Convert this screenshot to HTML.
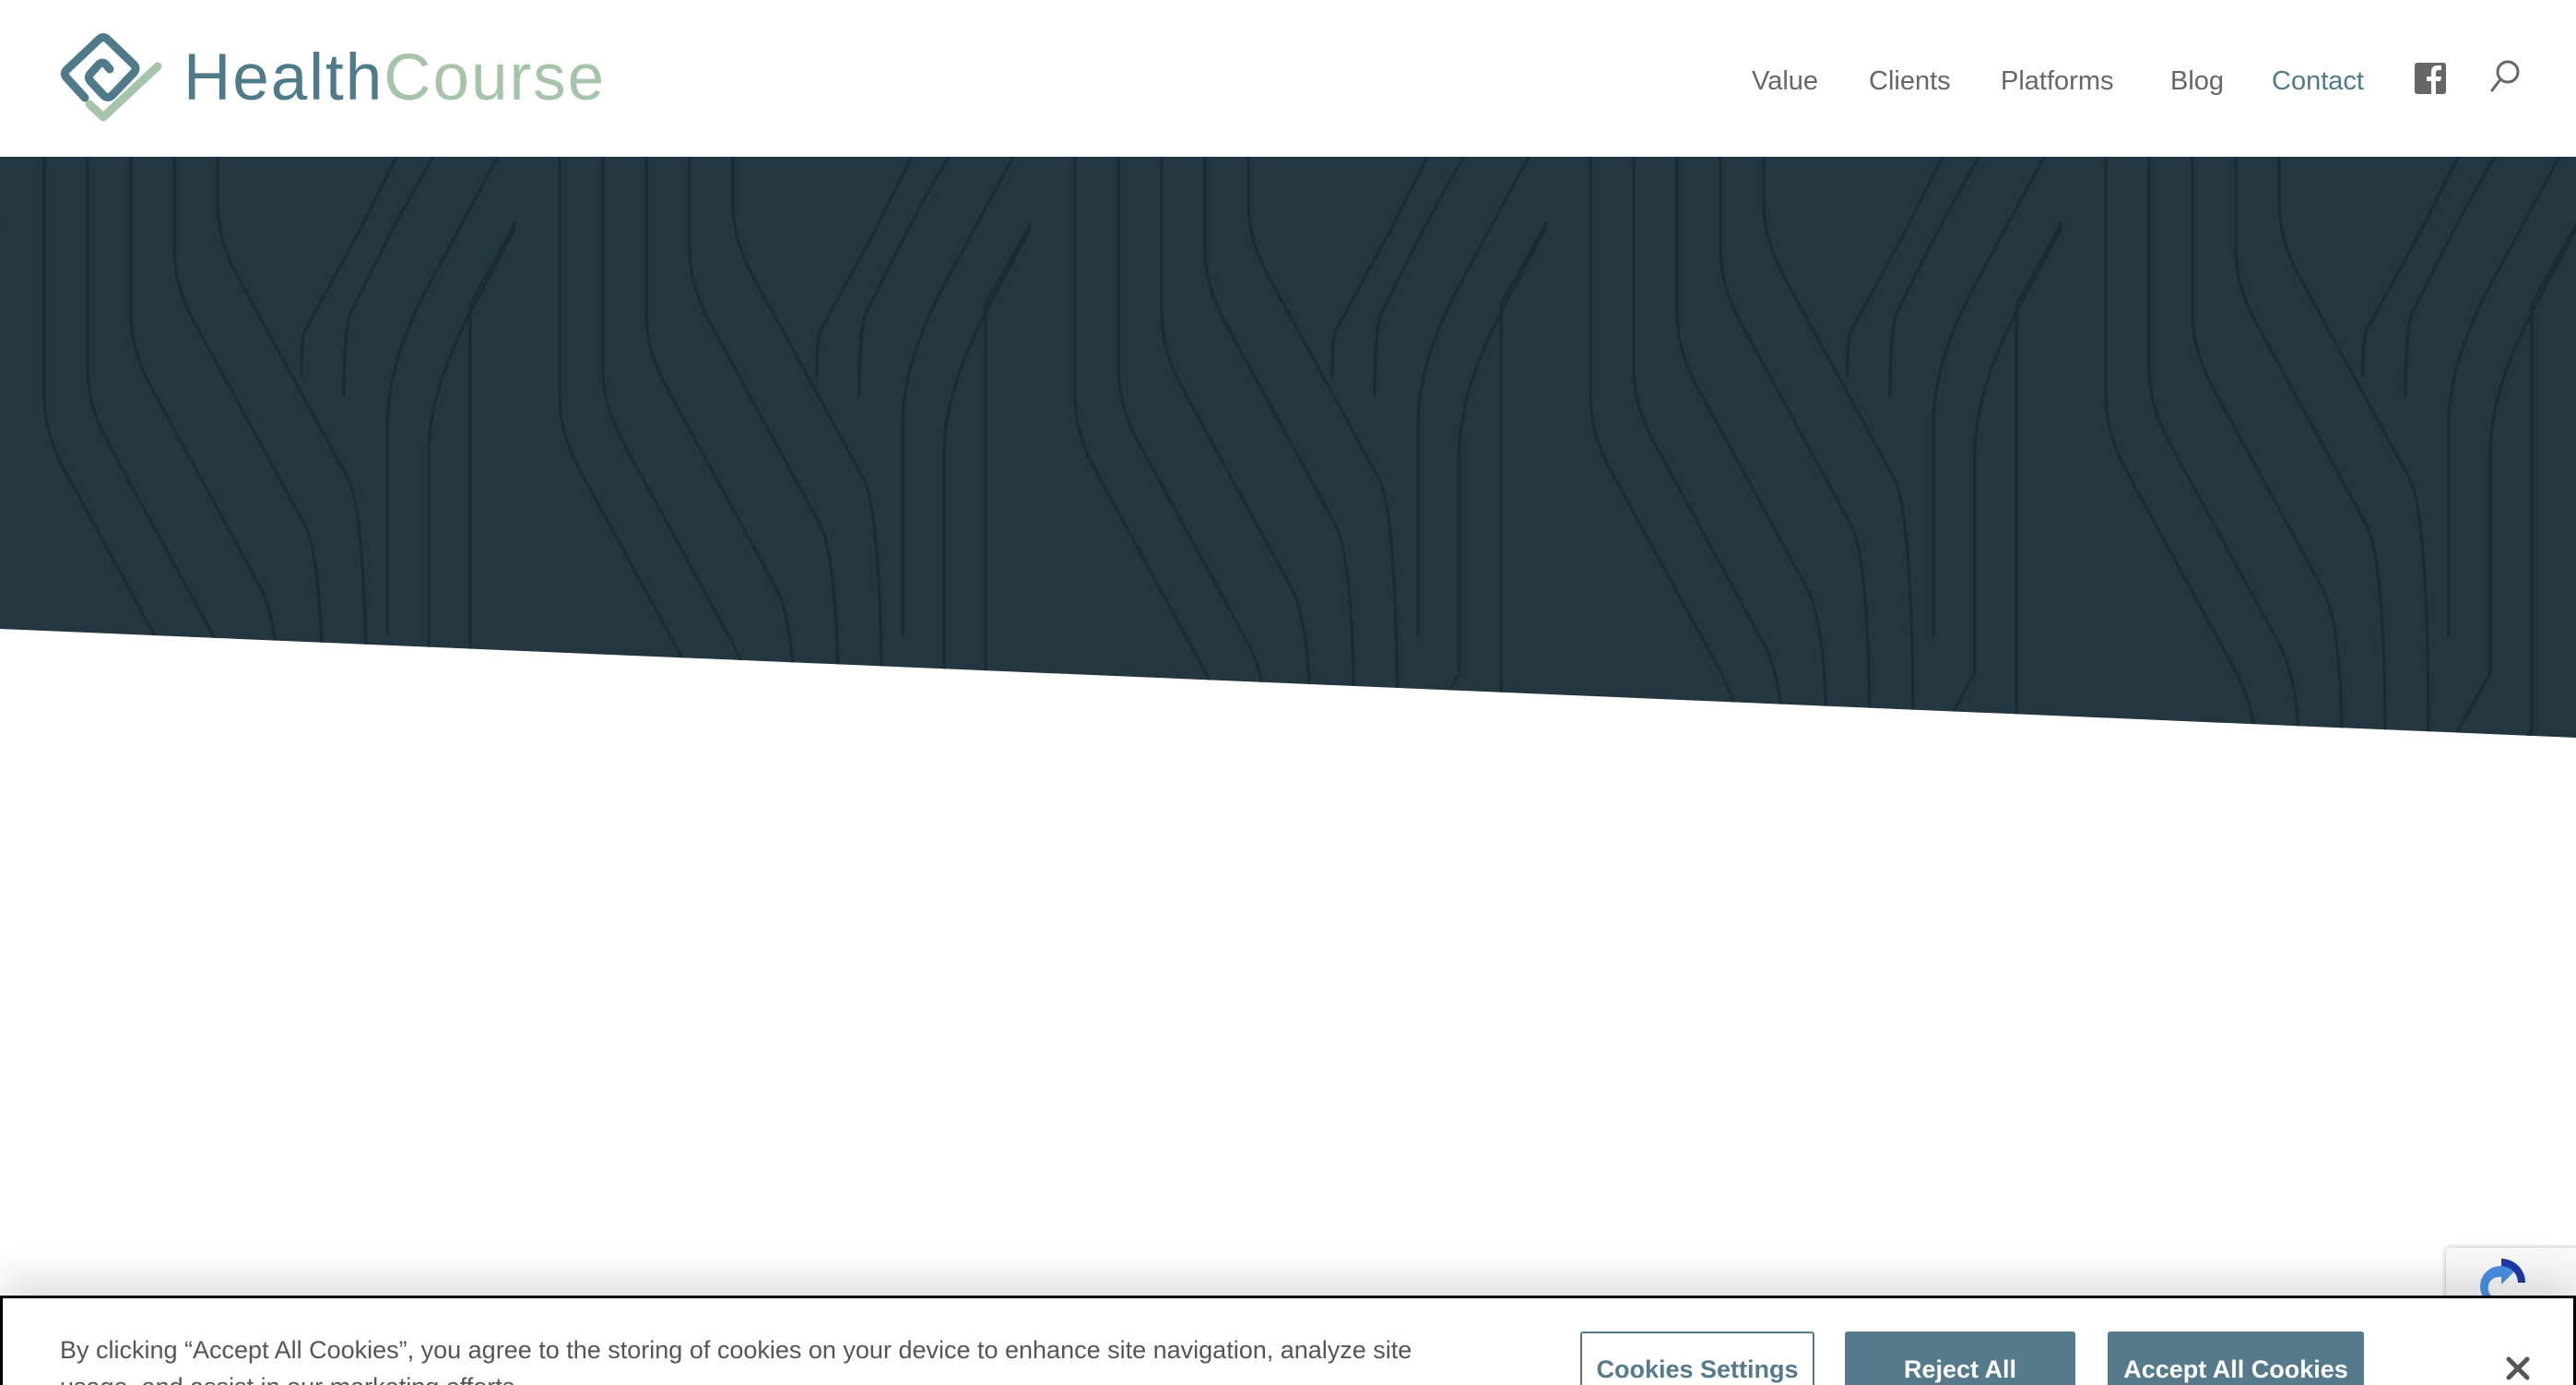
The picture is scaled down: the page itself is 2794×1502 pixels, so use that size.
<!DOCTYPE html>
<html><head><meta charset="utf-8">
<style>
html,body{margin:0;padding:0;width:2794px;height:1502px;overflow:hidden;background:#fff;font-family:"Liberation Sans",sans-serif;position:relative;}
.hdr{position:absolute;left:0;top:0;width:2794px;height:170px;background:#fff;}
.logo-t{position:absolute;left:199px;top:49px;font-size:71px;letter-spacing:2px;line-height:1;}
.nav{position:absolute;top:70px;font-size:29px;color:#666;line-height:36px;}
.band{position:absolute;left:0;top:170px;width:2794px;height:632px;}
.cookie{position:absolute;left:0;top:1405px;width:2788px;height:94px;border:3px solid #000;border-bottom:none;background:#fff;box-shadow:0 -20px 40px rgba(0,0,0,0.12);overflow:hidden;}
.ctext{position:absolute;left:62px;top:36px;font-size:27px;color:#555;line-height:40px;width:1500px;}
.btn{position:absolute;top:36px;height:70px;border-radius:3px;font-size:27px;font-weight:bold;text-align:center;line-height:82px;box-sizing:border-box;}
</style></head><body>
<div class="hdr">
<svg style="position:absolute;left:0;top:0" width="200" height="150" viewBox="0 0 200 150">
<path d="M92 106 L72 84 Q69 80 72 76 L107 43 Q112 38 117 43 L145 70 Q149 74 145 79 L122 103 Q117 108 112 103 L98 88 Q95 84 98 80 L107 70 Q111 66 115 70 L119 75" fill="none" stroke="#4f7a8a" stroke-width="9" stroke-linecap="round" stroke-linejoin="round"/>
<path d="M97 113 L112 127 L171 72" fill="none" stroke="#a6c4a8" stroke-width="9" stroke-linecap="round" stroke-linejoin="round"/>
</svg>
<div class="logo-t"><span style="color:#4f7a8a">Health</span><span style="color:#a6c4a8">Course</span></div>
<div class="nav" style="left:1900px">Value</div>
<div class="nav" style="left:2027px">Clients</div>
<div class="nav" style="left:2170px">Platforms</div>
<div class="nav" style="left:2354px">Blog</div>
<div class="nav" style="left:2464px;color:#4f7a8a">Contact</div>
<svg style="position:absolute;left:2619px;top:68px" width="34" height="34" viewBox="0 0 34 34"><rect width="34" height="34" rx="3" fill="#666"/><path d="M23 34 V20 H28 L29 15 H23 V11 Q23 8 26 8 H29 V3 H25 Q18 3 18 10 V15 H13 V20 H18 V34Z" fill="#fff"/></svg>
<svg style="position:absolute;left:2700px;top:64px" width="34" height="38" viewBox="0 0 34 38"><circle cx="20" cy="14" r="11" fill="none" stroke="#666" stroke-width="3"/><path d="M12 22 L3 34" stroke="#666" stroke-width="3" stroke-linecap="round"/></svg>
</div>
<svg class="band" viewBox="0 0 2794 632" preserveAspectRatio="none">
<defs>
<clipPath id="c"><path d="M0 0 H2794 V630 L0 512 Z"/></clipPath>
<pattern id="p" x="0" y="0" width="559" height="632" patternUnits="userSpaceOnUse">
<g fill="none" stroke="#1c2b32" stroke-width="3">
<path d="M48 0 V260 Q48 300 70 340 L190 560 Q210 600 210 640"/>
<path d="M95 0 V230 Q95 270 117 310 L237 530 Q257 570 257 640"/>
<path d="M142 0 V170 Q142 210 164 250 L284 470 Q304 510 304 640"/>
<path d="M189 0 V100 Q189 140 211 180 L331 400 Q351 440 351 640"/>
<path d="M236 0 V50 Q236 90 258 130 L378 350 Q398 390 398 640"/>
<path d="M430 0 Q410 40 390 80 L330 190 Q327 200 327 240"/>
<path d="M470 0 Q440 50 410 110 L380 170 Q373 190 373 260"/>
<path d="M540 0 L470 130 Q420 220 420 290 V520"/>
<path d="M600 0 L520 150 Q465 250 465 320 V560"/>
<path d="M560 70 L510 160 V640"/>
<path d="M0 70 L-50 160"/>
<path d="M465 560 L420 640"/><path d="M510 620 L500 640"/>
</g>
</pattern>
</defs>
<g clip-path="url(#c)"><rect width="2794" height="632" fill="#243740"/><rect width="2794" height="632" fill="url(#p)"/></g>
</svg>
<div style="position:absolute;left:2653px;top:1353px;width:160px;height:80px;background:#f9f9f9;border-radius:3px;box-shadow:0 0 6px rgba(0,0,0,0.3)">
<svg style="position:absolute;left:30px;top:8px" width="60" height="60" viewBox="0 0 60 60"><path d="M10 45 A22 22 0 0 1 30 12 L30 4 L44 18 L30 32 L30 24 A12 12 0 0 0 20 45Z" fill="#4a90e2"/><path d="M30 4 A26 26 0 0 1 56 30 L48 30 A18 18 0 0 0 30 12Z" fill="#1c3aa9"/></svg>
</div>
<div class="cookie">
<div class="ctext">By clicking “Accept All Cookies”, you agree to the storing of cookies on your device to enhance site navigation, analyze site usage, and assist in our marketing efforts.</div>
<div class="btn" style="left:1711px;width:254px;border:2px solid #557a8b;color:#557a8b;background:#fff;line-height:78px">Cookies Settings</div>
<div class="btn" style="left:1998px;width:250px;background:#557a8b;color:#fff">Reject All</div>
<div class="btn" style="left:2283px;width:278px;background:#557a8b;color:#fff">Accept All Cookies</div>
<svg style="position:absolute;left:2715px;top:63px" width="26" height="26" viewBox="0 0 26 26"><path d="M3 3 L23 23 M23 3 L3 23" stroke="#555" stroke-width="5" stroke-linecap="round"/></svg>
</div>
</body></html>
